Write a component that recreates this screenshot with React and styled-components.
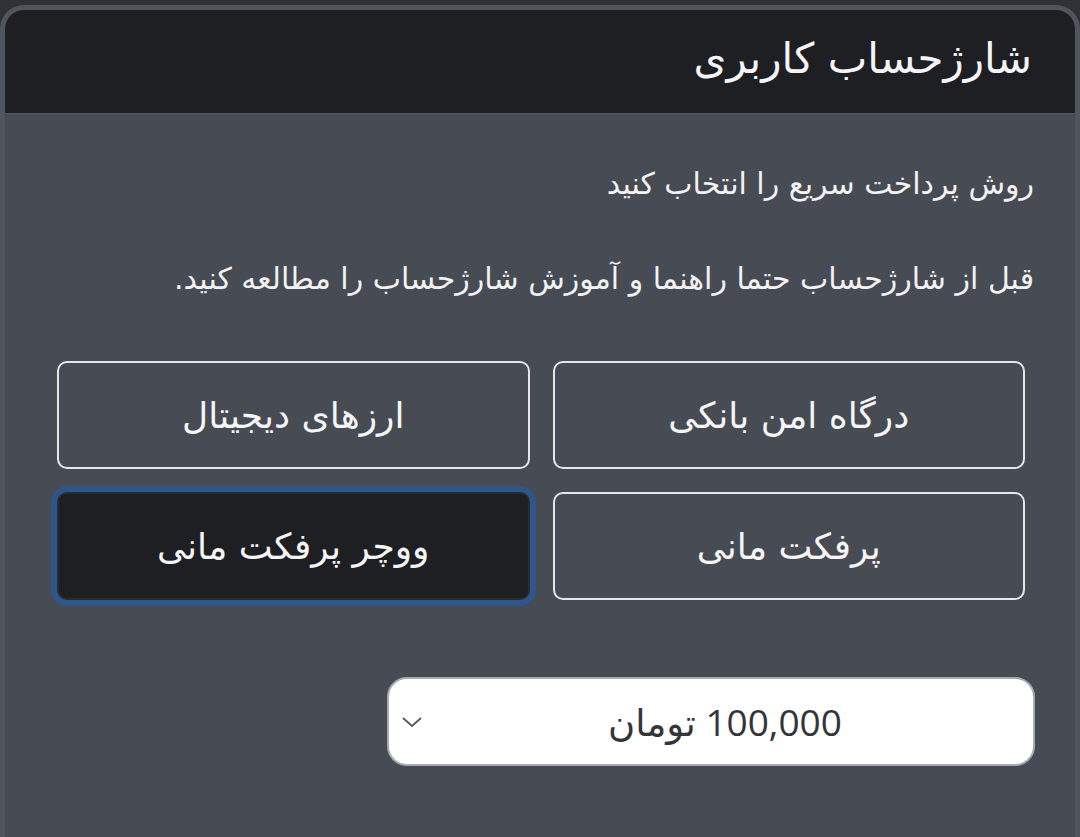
import styled, { createGlobalStyle } from "styled-components";

const Global = createGlobalStyle`
  html, body {
    margin: 0;
    padding: 0;
    background: #2f3136;
  }
  body {
    font-family: "DejaVu Sans", "Noto Sans", sans-serif;
  }
`;

const Card = styled.div`
  margin-top: 5px;
  min-height: 832px;
  box-sizing: border-box;
  border: 5px solid #50545c;
  border-bottom: none;
  border-radius: 24px 24px 0 0;
  background: #474b54;
  direction: rtl;
  overflow: hidden;
`;

const Header = styled.div`
  height: 104px;
  background: #1e1f23;
  border-radius: 18px 18px 0 0;
  display: flex;
  align-items: center;
  padding: 0 43px 6px;
  box-sizing: border-box;
  border-bottom: 1px solid #54585f;
`;

const Title = styled.h1`
  margin: 0;
  color: #f4f4f4;
  font-size: 42px;
  font-weight: 500;
`;

const Body = styled.div`
  padding: 50px 41px 0 41px;
  display: flex;
  flex-direction: column;
`;

const Line = styled.p`
  margin: 0 0 ${(p) => p.$gap || 0}px 0;
  color: #f2f2f2;
  font-size: 30px;
  line-height: 40px;
`;

const Grid = styled.div`
  display: grid;
  grid-template-columns: 1fr 1fr;
  gap: 23px;
  margin: 0 9px 0 11px;
`;

const Option = styled.button`
  height: 108px;
  border-radius: 10px;
  border: 2px solid ${(p) => (p.$active ? "#2a2c31" : "#e6e6e6")};
  background: ${(p) => (p.$active ? "#1e1f23" : "transparent")};
  box-shadow: ${(p) => (p.$active ? "0 0 0 6px #2f5689" : "none")};
  color: #f5f5f5;
  font-family: "DejaVu Sans", sans-serif;
  font-size: 36px;
  cursor: pointer;
  direction: rtl;
`;

const SelectBox = styled.div`
  margin-top: 77px;
  width: 648px;
  height: 89px;
  box-sizing: border-box;
  margin-right: -1px;
  background: #ffffff;
  border: 2px solid #a9abaf;
  border-radius: 20px;
  display: flex;
  align-items: center;
  padding: 0 12px;
`;

const Value = styled.span`
  flex: 1;
  text-align: center;
  color: #333538;
  font-family: "Open Sans", "DejaVu Sans", sans-serif;
  font-size: 37px;
  padding-left: 6px;
`;

const Chevron = () => (
  <svg width="22" height="14" viewBox="0 0 22 14" fill="none">
    <path d="M2 3l9 8 9-8" stroke="#55585c" strokeWidth="1.8" />
  </svg>
);

const options = [
  { label: "درگاه امن بانکی" },
  { label: "ارزهای دیجیتال" },
  { label: "پرفکت مانی" },
  { label: "ووچر پرفکت مانی", active: true },
];

export default function App() {
  return (
    <>
      <Global />
      <Card>
        <Header>
          <Title>شارژحساب کاربری</Title>
        </Header>
        <Body>
          <Line $gap={55}>روش پرداخت سریع را انتخاب کنید</Line>
          <Line $gap={62}>قبل از شارژحساب حتما راهنما و آموزش شارژحساب را مطالعه کنید.</Line>
          <Grid>
            {options.map((o) => (
              <Option key={o.label} $active={o.active}>
                {o.label}
              </Option>
            ))}
          </Grid>
          <SelectBox>
            <Value>100,000 تومان</Value>
            <Chevron />
          </SelectBox>
        </Body>
      </Card>
    </>
  );
}
